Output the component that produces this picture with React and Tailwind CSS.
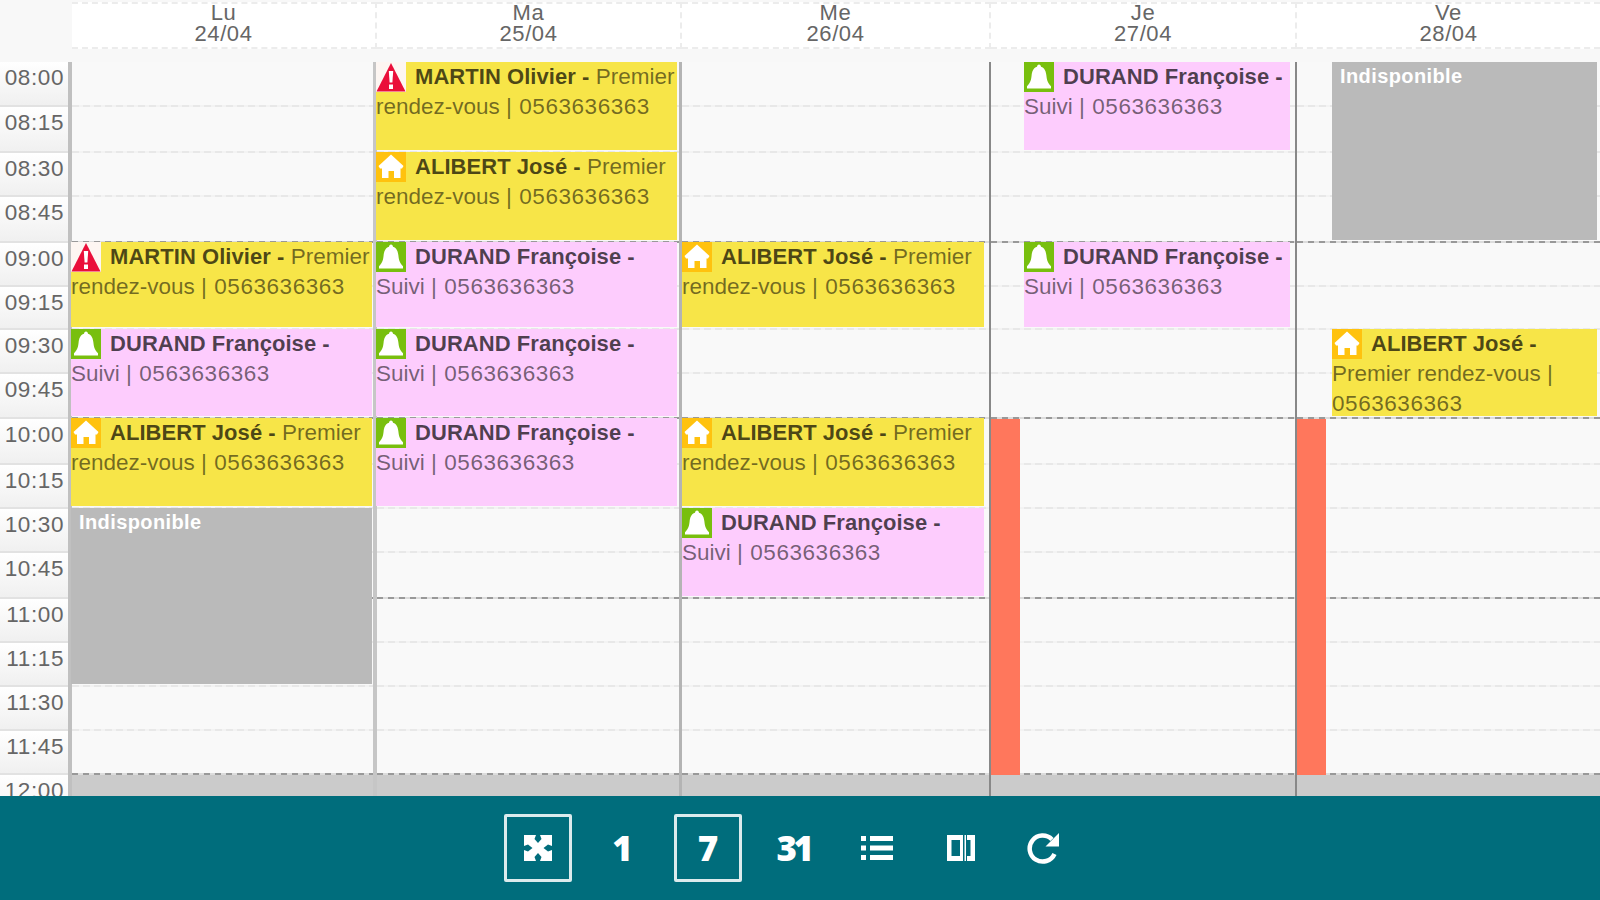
import React from 'react';

const PHONE = '0563636363';

const HOURS = [
    '08:00', '08:15', '08:30', '08:45',
    '09:00', '09:15', '09:30', '09:45',
    '10:00', '10:15', '10:30', '10:45',
    '11:00', '11:15', '11:30', '11:45',
    '12:00',
];

const martin = { icon: 'alert', name: 'MARTIN Olivier', reason: 'Premier rendez-vous', color: 'yellow' };
const alibert = { icon: 'home', name: 'ALIBERT José', reason: 'Premier rendez-vous', color: 'yellow' };
const durand = { icon: 'bell', name: 'DURAND Françoise', reason: 'Suivi', color: 'pink' };
const busy = { busy: true };

// start = index of the quarter of an hour, span = number of quarters
const DAYS = [
    {
        name: 'Lu',
        date: '24/04',
        border: 'border-r-4 border-[#c6c6c6]',
        margin: '-ml-px mr-px',
        events: [
            { ...martin, start: 4, span: 2 },
            { ...durand, start: 6, span: 2 },
            { ...alibert, start: 8, span: 2 },
            { ...busy, start: 10, span: 4 },
        ],
    },
    {
        name: 'Ma',
        date: '25/04',
        border: 'border-r-[3px] border-[#b4b4b4]',
        margin: '-ml-px mr-[2px]',
        events: [
            { ...martin, start: 0, span: 2 },
            { ...alibert, start: 2, span: 2 },
            { ...durand, start: 4, span: 2 },
            { ...durand, start: 6, span: 2 },
            { ...durand, start: 8, span: 2 },
        ],
    },
    {
        name: 'Me',
        date: '26/04',
        border: 'border-r-2 border-[#888888]',
        margin: 'mr-[5px]',
        events: [
            { ...alibert, start: 4, span: 2 },
            { ...alibert, start: 8, span: 2 },
            { ...durand, start: 10, span: 2 },
        ],
    },
    {
        name: 'Je',
        date: '27/04',
        border: 'border-r-2 border-[#888888]',
        margin: 'ml-[33px] mr-[5px]',
        closed: true,
        events: [
            { ...durand, start: 0, span: 2 },
            { ...durand, start: 4, span: 2 },
        ],
    },
    {
        name: 'Ve',
        date: '28/04',
        border: '',
        margin: 'ml-[35px] mr-[3px]',
        closed: true,
        events: [
            { ...busy, start: 0, span: 4 },
            { ...alibert, start: 6, span: 2 },
        ],
    },
];

const COLS = 'grid grid-cols-[72px_305px_305px_309px_306px_303px]';
const ROWS = 'grid grid-rows-[45px_46px_44px_46px_44px_43px_44px_45px_46px_44px_44px_46px_44px_44px_44px_44px_46px]';

const EventIcon = ({ type }) => {
    if (type === 'alert') {
        return (
            <svg viewBox="0 0 30 30" className="h-[30px] w-[30px] bg-[#fdf6f2]">
                <path d="M15 1 L29.5 29.500 H0.5 Z" fill="#ea0f3a" />
                <path d="M12.8 9 h4.4 l-0.8 11.5 h-2.800 Z" fill="#fff" />
                <rect x="13" y="22.500" width="4" height="4.500" fill="#fff" />
            </svg>
        );
    }
    if (type === 'home') {
        return (
            <svg viewBox="0 0 30 30" className="h-[30px] w-[30px] bg-[#ffc20e]">
                <path d="M15 2.500 L27.500 14 L26 16.500 H24.500 V26 H18 V19 H12.500 V26 H6 V16.500 H4 L2.500 14 Z" fill="#fff" />
            </svg>
        );
    }
    return (
        <svg viewBox="0 0 30 30" className="h-[30px] w-[30px] bg-[#78bf0e]">
            <path
                d="M15 2.500 c1.200 0 1.800 1 2 2.200 c3.800 1.300 5 4.800 5.400 8.800 c.4 4.500 1.300 7.500 4.600 10.800 v2.200 H3 V24.300 c3.300 -3.300 4.200 -6.300 4.600 -10.800 c.4 -4 1.600 -7.500 5.400 -8.800 c.2 -1.200 .8 -2.200 2 -2.200 Z"
                fill="#fff"
            />
        </svg>
    );
};

const Event = ({ event, margin }) => {
    const gridRow = `${event.start + 1} / span ${event.span}`;
    const lift = event.start > 0 ? '-mt-px' : '';

    if (event.busy) {
        return (
            <div
                className={`z-10 col-start-1 mb-[3px] bg-[#bababa] pl-2 text-[20px] leading-[29px] font-bold tracking-[0.4px] text-white ${margin} ${lift}`}
                style={{ gridRow }}
            >
                Indisponible
            </div>
        );
    }

    return (
        <div
            className={`z-10 col-start-1 mb-[3px] overflow-hidden text-[22.5px] leading-[30px] text-black/55 ${margin} ${lift} ${
                event.color === 'yellow' ? 'bg-[#f7e548]' : 'bg-[#fdccfd]'
            }`}
            style={{ gridRow }}
        >
            <span className="float-left mr-[9px] h-7">
                <EventIcon type={event.icon} />
            </span>
            <p>
                <b className="text-[22px] tracking-[0.05px] text-black/70">{event.name} -</b>{' '}
                {event.reason} <span className="tracking-[0.55px]">| {PHONE}</span>
            </p>
        </div>
    );
};

const Day = ({ day }) => (
    <div className={`${ROWS} grid-cols-1 ${day.border}`}>
        {HOURS.map((hour, i) => (
            <div
                key={hour}
                className={`col-start-1 flex flex-col justify-end ${hour === '12:00' ? 'bg-[#cbcbcb]' : 'bg-[#f9f9f9]'}`}
                style={{ gridRow: i + 1 }}
            >
                <div
                    className={`h-[2px] ${
                        i % 4 === 3
                            ? 'bg-[repeating-linear-gradient(90deg,#999999_0_6px,#dcdcdc_6px_11px)]'
                            : 'bg-[repeating-linear-gradient(90deg,#e8e8e8_0_7px,#f3f3f3_7px_11px)]'
                    }`}
                />
            </div>
        ))}
        {day.closed && <div className="z-10 col-start-1 row-start-9 row-end-17 w-[29px] bg-[#ff775c]" />}
        {day.events.map(event => (
            <Event key={event.start} event={event} margin={day.margin} />
        ))}
    </div>
);

const ToolButton = ({ active, className = '', children }) => (
    <button
        className={`flex h-[68px] w-[68px] items-center justify-center rounded-[2px] font-['Open_Sans',sans-serif] text-[35px] font-extrabold text-white ${
            active ? 'border-[3px] border-[#dcebed]' : ''
        } ${className}`}
    >
        {children}
    </button>
);

const App = () => {
    return (
        <div className="flex h-[900px] w-[1600px] flex-col overflow-hidden bg-[#f8f8f8] font-['Liberation_Sans',sans-serif]">
            <div className={`${COLS} h-[62px] shrink-0`}>
                <div />
                {DAYS.map(day => (
                    <div
                        key={day.name}
                        className="mt-[2px] h-[47px] border-y-2 border-r-2 border-dashed border-[#ececec] bg-white text-center text-[22px] leading-[21px] tracking-[0.6px] text-[#666666] last:border-r-0"
                    >
                        <div className="-mt-[2px]">{day.name}</div>
                        <div>{day.date}</div>
                    </div>
                ))}
            </div>

            <div className={`${COLS} h-[734px] shrink-0 overflow-hidden`}>
                <div className={`${ROWS} border-r-4 border-[#c0c0c0]`}>
                    {HOURS.map(hour => (
                        <div
                            key={hour}
                            className="border-b-2 border-[#e2e2e2] bg-linear-to-b from-white to-[#f0f0f0] pr-[4px] text-right text-[22.5px] leading-[31px] tracking-[0.6px] text-[#666666]"
                        >
                            {hour}
                        </div>
                    ))}
                </div>
                {DAYS.map(day => (
                    <Day key={day.name} day={day} />
                ))}
            </div>

            <div className="flex flex-1 items-center justify-center gap-[16.500px] bg-[#006d7c] pr-[17px]">
                <ToolButton active>
                    <svg viewBox="0 0 28 28" className="h-7 w-7" fill="#fff">
                        <path d="M0 1 H12 L10.500 5 L14 9 L17.500 5 L16 1 H28 V12 L24 10.500 L19.500 14 L24 17.500 L28 16 V27 H16 L17.500 23 L14 19 L10.500 23 L12 27 H0 V16 L4 17.500 L8.500 14 L4 10.500 L0 12 Z" />
                    </svg>
                </ToolButton>
                <ToolButton>1</ToolButton>
                <ToolButton active className="translate-x-[1px]">7</ToolButton>
                <ToolButton className="translate-x-[2px] tracking-[-3.5px]">31</ToolButton>
                <ToolButton className="translate-x-[1px]">
                    <svg viewBox="0 0 34 26" className="h-[26px] w-[34px]" fill="#fff">
                        <path d="M1 1 h5 v5 h-5 Z M1 10.500 h5 v5 h-5 Z M1 20 h5 v5 h-5 Z M10 1 h23 v5 h-23 Z M10 10.500 h23 v5 h-23 Z M10 20 h23 v5 h-23 Z" />
                    </svg>
                </ToolButton>
                <ToolButton>
                    <svg viewBox="0 0 28 28" className="h-7 w-7" fill="#fff">
                        <path fillRule="evenodd" d="M0 1 H16 V27 H0 Z M4.500 6 V22 H13 V6 Z" />
                        <rect x="17.500" y="1" width="1.500" height="26" />
                        <path d="M20 1 H28 V27 H20 V22 H23.500 V6 H20 Z" />
                    </svg>
                </ToolButton>
                <ToolButton className="-translate-x-[2px]">
                    <svg viewBox="0 0 34 34" className="h-[34px] w-[34px]" fill="none">
                        <path d="M26 8.500 A13 13 0 1 0 28.500 23" stroke="#fff" strokeWidth="4.500" />
                        <path d="M33 2 V15.500 H19.500 Z" fill="#fff" />
                    </svg>
                </ToolButton>
            </div>
        </div>
    );
};

export default App;
